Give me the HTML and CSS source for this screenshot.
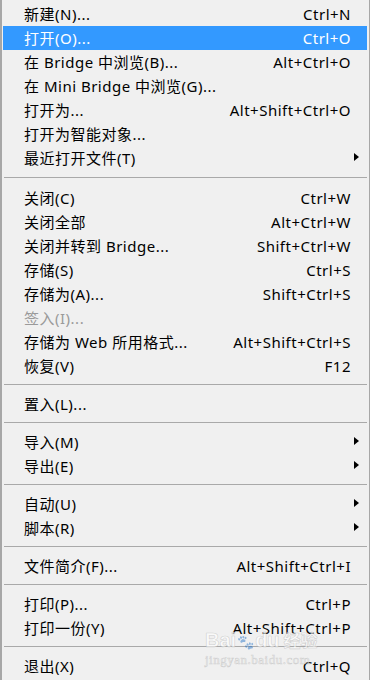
FILE: index.html
```html
<!DOCTYPE html>
<html lang="zh-CN">
<head>
<meta charset="utf-8">
<title>文件菜单</title>
<link rel="stylesheet" href="styles.css">
</head>
<body>
<div class="menu">
  <div class="group first">
    <div class="item"><span class="label">新建(N)...</span><span class="key">Ctrl+N</span></div>
    <div class="item active"><span class="label">打开(O)...</span><span class="key">Ctrl+O</span></div>
    <div class="item"><span class="label">在 Bridge 中浏览(B)...</span><span class="key">Alt+Ctrl+O</span></div>
    <div class="item"><span class="label">在 Mini Bridge 中浏览(G)...</span><span class="key"></span></div>
    <div class="item"><span class="label">打开为...</span><span class="key">Alt+Shift+Ctrl+O</span></div>
    <div class="item"><span class="label">打开为智能对象...</span><span class="key"></span></div>
    <div class="item sub"><span class="label">最近打开文件(T)</span><span class="arrow"></span></div>
  </div>
  <div class="sep sep-first"></div>
  <div class="group">
    <div class="item"><span class="label">关闭(C)</span><span class="key">Ctrl+W</span></div>
    <div class="item"><span class="label">关闭全部</span><span class="key">Alt+Ctrl+W</span></div>
    <div class="item"><span class="label">关闭并转到 Bridge...</span><span class="key">Shift+Ctrl+W</span></div>
    <div class="item"><span class="label">存储(S)</span><span class="key">Ctrl+S</span></div>
    <div class="item"><span class="label">存储为(A)...</span><span class="key">Shift+Ctrl+S</span></div>
    <div class="item disabled"><span class="label">签入(I)...</span><span class="key"></span></div>
    <div class="item"><span class="label">存储为 Web 所用格式...</span><span class="key">Alt+Shift+Ctrl+S</span></div>
    <div class="item"><span class="label">恢复(V)</span><span class="key">F12</span></div>
  </div>
  <div class="sep"></div>
  <div class="group">
    <div class="item"><span class="label">置入(L)...</span><span class="key"></span></div>
  </div>
  <div class="sep"></div>
  <div class="group">
    <div class="item sub"><span class="label">导入(M)</span><span class="arrow"></span></div>
    <div class="item sub"><span class="label">导出(E)</span><span class="arrow"></span></div>
  </div>
  <div class="sep"></div>
  <div class="group">
    <div class="item sub"><span class="label">自动(U)</span><span class="arrow"></span></div>
    <div class="item sub"><span class="label">脚本(R)</span><span class="arrow"></span></div>
  </div>
  <div class="sep"></div>
  <div class="group">
    <div class="item"><span class="label">文件简介(F)...</span><span class="key">Alt+Shift+Ctrl+I</span></div>
  </div>
  <div class="sep"></div>
  <div class="group">
    <div class="item"><span class="label">打印(P)...</span><span class="key">Ctrl+P</span></div>
    <div class="item"><span class="label">打印一份(Y)</span><span class="key">Alt+Shift+Ctrl+P</span></div>
  </div>
  <div class="sep"></div>
  <div class="group">
    <div class="item"><span class="label">退出(X)</span><span class="key">Ctrl+Q</span></div>
  </div>
  <div class="watermark">
    <div class="wm-brand">Bai<span class="paw">&#x1F43E;</span>du<span class="wm-cn">经验</span></div>
    <div class="wm-url">jingyan.baidu.com</div>
  </div>
</div>
</body>
</html>
```

FILE: styles.css
```css
* { box-sizing: border-box; }

html, body {
  margin: 0;
  padding: 0;
  background: #f0f0f0;
}

body {
  width: 370px;
  height: 680px;
  overflow: hidden;
  font-family: "Noto Sans", "Noto Sans CJK SC", sans-serif;
  font-size: 15px;
  letter-spacing: 0.5px;
  color: #000;
}

.menu {
  position: relative;
  width: 370px;
  height: 680px;
  background: #f0f0f0;
  border-left: 2px solid #a7a7a7;
  border-right: 1px solid #a7a7a7;
  padding: 2px 2px 2px 1px;
  display: flex;
  flex-direction: column;
}

.group {
  display: flex;
  flex-direction: column;
}

.item {
  height: 24px;
  line-height: 24px;
  display: flex;
  align-items: center;
  justify-content: space-between;
  padding: 0 16px 0 21px;
  white-space: nowrap;
}

.item.active {
  background: #3399ff;
  color: #fff;
}

.item.disabled {
  color: #9a9a9a;
}

.key {
  text-align: right;
}

.item.sub {
  padding-right: 8px;
}

.arrow {
  width: 0;
  height: 0;
  border-top: 4.5px solid transparent;
  border-bottom: 4.5px solid transparent;
  border-left: 5px solid #000;
  margin-top: -3px;
}

.sep {
  height: 14px;
  padding-top: 6px;
  padding-left: 1px;
}

.sep-first {
  height: 16px;
  padding-top: 7px;
}

.sep::before {
  content: "";
  display: block;
  height: 1px;
  background: #a9a9a9;
}

.watermark {
  position: absolute;
  left: 203px;
  top: 630px;
  color: rgba(255, 255, 255, 0.65);
  -webkit-text-stroke: 0.6px rgba(150, 150, 150, 0.4);
  pointer-events: none;
  line-height: 1;
}

.wm-brand {
  font-family: "Liberation Sans", "Noto Sans CJK SC", sans-serif;
  font-size: 20px;
  font-weight: bold;
  letter-spacing: 0;
}

.wm-cn {
  font-size: 17px;
  margin-left: 4px;
}

.paw {
  font-size: 14px;
  margin: 0 1px;
  color: rgba(200, 200, 200, 0.45);
  -webkit-text-stroke: 0;
}

.wm-url {
  margin-top: 3px;
  font-family: "Liberation Serif", serif;
  font-size: 13px;
  letter-spacing: 0.5px;
}
```
